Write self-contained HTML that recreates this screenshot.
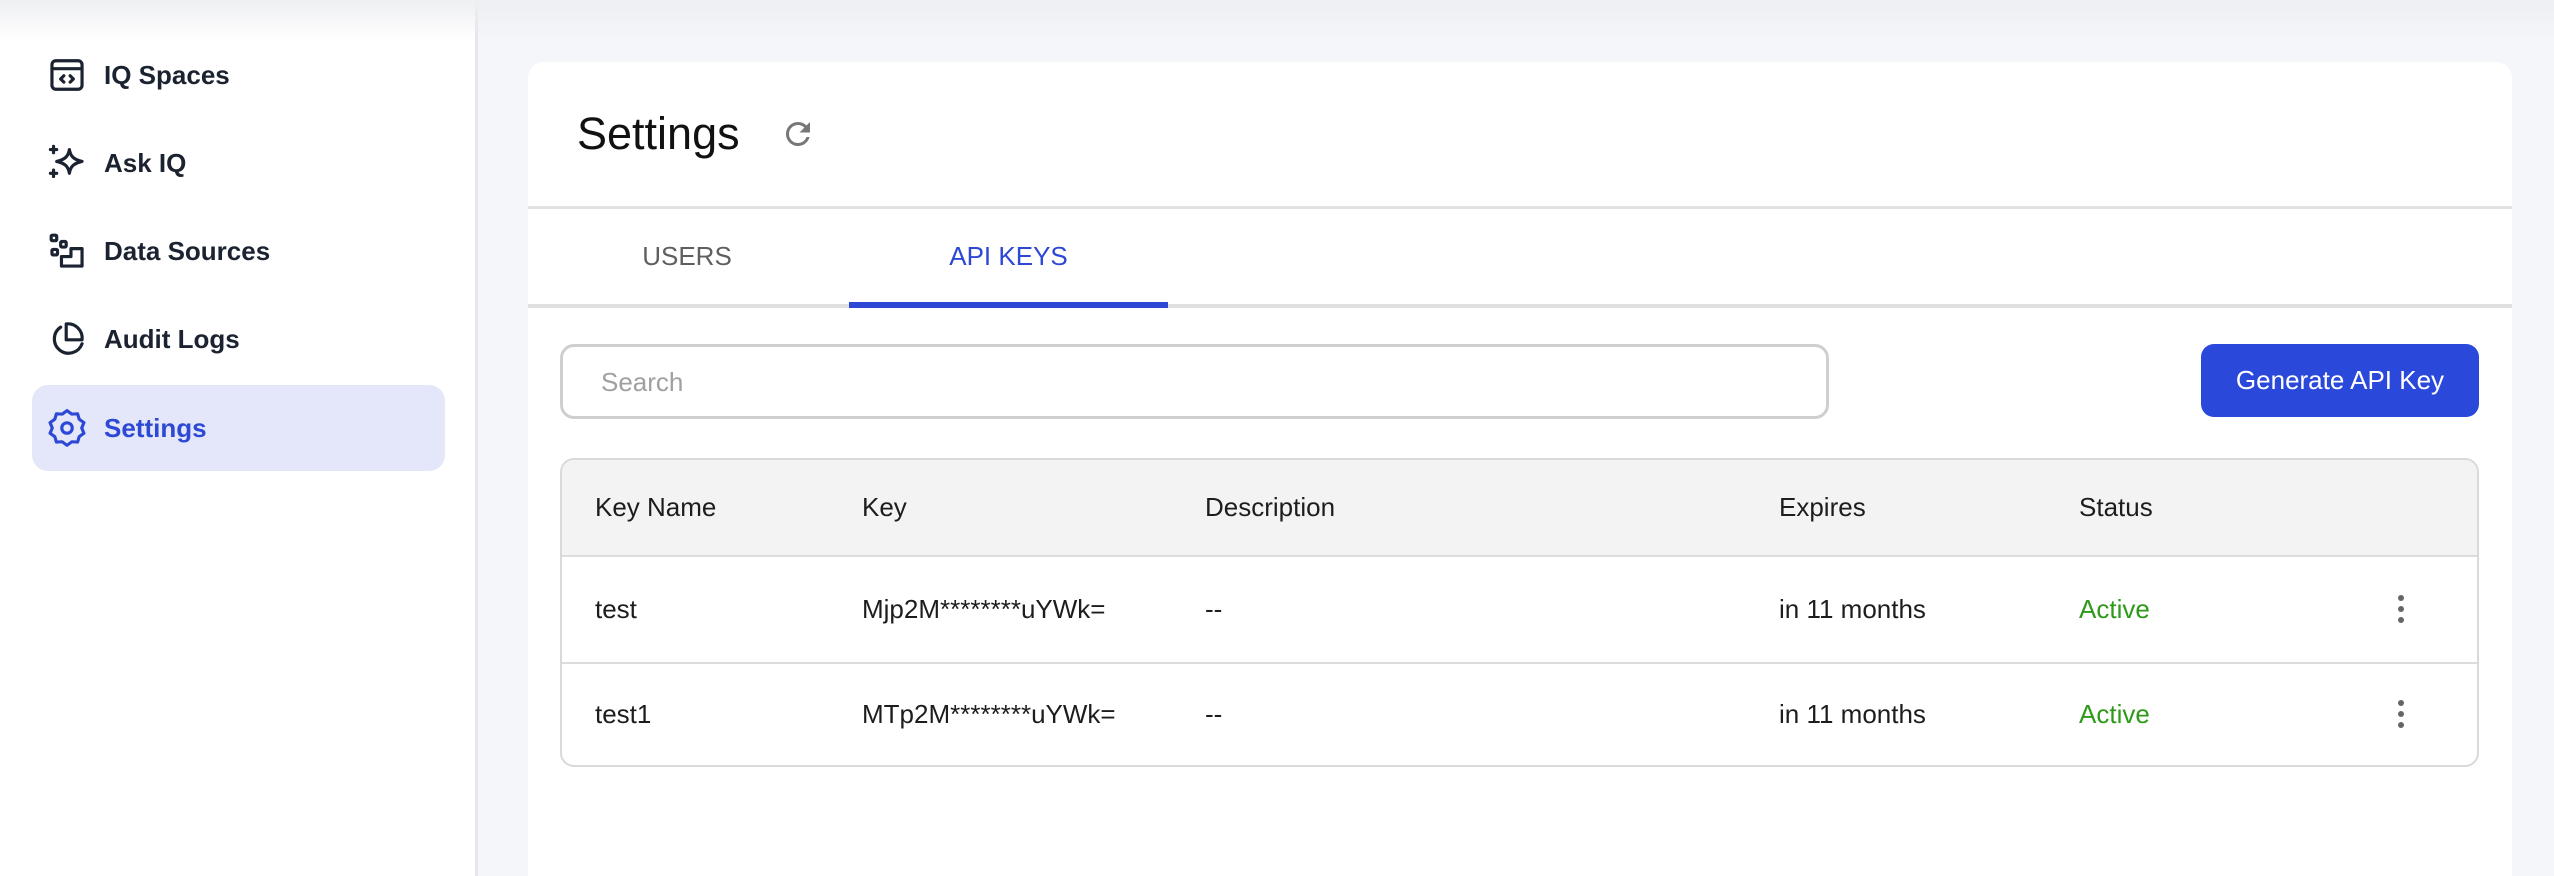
<!DOCTYPE html>
<html style="overflow:hidden"><head><meta charset="utf-8"><style>
*{box-sizing:border-box;margin:0;padding:0}
html,body{width:2554px;height:876px;overflow:hidden}
body{background:#f5f6fa;font-family:"Liberation Sans",Roboto,sans-serif;position:relative}
.side{position:absolute;left:0;top:0;width:478px;height:876px;background:#fff;border-right:3px solid #e6e7ea}
.topsh{position:absolute;left:0;top:0;width:2554px;height:40px;background:linear-gradient(#eeeff2,rgba(245,246,250,0))}
.nav{position:absolute;left:32px;width:413px;height:86px;display:flex;align-items:center;font-size:26px;font-weight:bold;color:#1b2230;border-radius:16px}
.nav svg{position:absolute;left:16px;width:38px;height:38px}
.nav span{position:absolute;left:72px}
.nav.act{background:#e4e7f9;color:#2d48d4}
.card{position:absolute;left:528px;top:62px;width:1984px;height:814px;background:#fff;border-radius:16px 16px 0 0}
.abs{position:absolute}
.td{position:absolute;font-size:26px;color:#1d1d1d}
</style></head><body>
<div class="side">
<div class="topsh"></div>
<div class="nav" style="top:32px"><svg viewBox="0 0 24 24" fill="none" stroke="#1b2230" stroke-width="2" stroke-linecap="round" stroke-linejoin="round"><rect x="2.5" y="3" width="19" height="18" rx="2.5"/><path d="M2.5 8h19M10 12.5l-2 2 2 2M14 12.5l2 2-2 2"/></svg><span>IQ Spaces</span></div>
<div class="nav" style="top:120px"><svg viewBox="0 0 24 24" fill="none" stroke="#1b2230" stroke-width="2" stroke-linecap="round" stroke-linejoin="round"><path d="M13.5 3.5c.7 4.3 2.7 6.3 8 7.5-5.3 1.2-7.3 3.2-8 7.5-.7-4.3-2.7-6.3-8-7.5 5.3-1.2 7.3-3.2 8-7.5zM3.5 1.5v4M1.5 3.5h4M3.5 16.5v4M1.5 18.5h4"/></svg><span>Ask IQ</span></div>
<div class="nav" style="top:208px"><svg viewBox="0 0 24 24" fill="none" stroke="#1b2230" stroke-width="2" stroke-linejoin="round"><rect x="2" y="2" width="3.5" height="3.5" rx=".8"/><rect x="8" y="6" width="3.5" height="3.5" rx=".8"/><rect x="2.5" y="11" width="3.5" height="3.5" rx=".8"/><path d="M8.5 21.5v-6h6v-5h7v11z"/></svg><span>Data Sources</span></div>
<div class="nav" style="top:296px"><svg viewBox="0 0 24 24" fill="none" stroke="#1b2230" stroke-width="2" stroke-linecap="round" stroke-linejoin="round"><path d="M8 4.5A9 9 0 1 0 21.5 15"/><path d="M11.5 2.5a9 9 0 0 1 10 10h-10z"/></svg><span>Audit Logs</span></div>
<div class="nav act" style="top:385px"><svg viewBox="0 0 24 24" fill="none" stroke="#2d48d4" stroke-width="2" stroke-linejoin="round"><path d="M12 2l3 2.3 3.7-.2 1 3.6 3 2.2-1.4 3.5 1.4 3.5-3 2.2-1 3.6-3.7-.2L12 24.8l-3-2.3-3.7.2-1-3.6-3-2.2 1.4-3.5L1.3 9.9l3-2.2 1-3.6 3.7.2z" transform="translate(0 -.9) scale(1 .96)"/><circle cx="12" cy="12" r="3.3"/></svg><span>Settings</span></div>
</div>
<div class="card">
<div class="abs" style="left:49px;top:46px;font-size:45px;color:#111">Settings</div>
<svg class="abs" style="left:252px;top:54px" width="36" height="36" viewBox="0 0 24 24"><path fill="#777" d="M17.65 6.35A7.96 7.96 0 0 0 12 4a8 8 0 1 0 7.73 10h-2.08A6 6 0 1 1 12 6c1.66 0 3.14.69 4.22 1.78L13 11h7V4z"/></svg>
<div class="abs" style="left:0;top:144px;width:1984px;height:3px;background:#e2e2e2"></div>
<div class="abs" style="left:0;top:242px;width:1984px;height:4px;background:#e0e0e0"></div>
<div class="abs" style="left:321px;top:240px;width:319px;height:6px;background:#2d48d4"></div>
<div class="abs" style="left:0;top:179px;width:318px;text-align:center;font-size:26px;font-weight:500;color:#5f5f5f">USERS</div>
<div class="abs" style="left:321px;top:179px;width:319px;text-align:center;font-size:26px;font-weight:500;color:#2d48d4">API KEYS</div>
<div class="abs" style="left:32px;top:282px;width:1269px;height:75px;border:3px solid #cfcfcf;border-radius:14px"></div>
<div class="abs" style="left:73px;top:305px;font-size:26px;color:#a0a0a0">Search</div>
<div class="abs" style="left:1673px;top:282px;width:278px;height:73px;background:#2a48da;border-radius:13px;color:#fff;font-size:26px;display:flex;align-items:center;justify-content:center">Generate API Key</div>
<div class="abs" style="left:32px;top:396px;width:1919px;height:309px;border:2px solid #d9d9d9;border-radius:14px;overflow:hidden">
<div class="abs" style="left:0;top:0;width:100%;height:97px;background:#f3f3f3;border-bottom:2px solid #dcdcdc"></div>
<div class="abs" style="left:0;top:202px;width:100%;height:2px;background:#dcdcdc"></div>
</div>
</div>
<div class="td" style="left:595px;top:492px;font-weight:500">Key Name</div>
<div class="td" style="left:862px;top:492px;font-weight:500">Key</div>
<div class="td" style="left:1205px;top:492px;font-weight:500">Description</div>
<div class="td" style="left:1779px;top:492px;font-weight:500">Expires</div>
<div class="td" style="left:2079px;top:492px;font-weight:500">Status</div>
<div class="td" style="left:595px;top:594px">test</div>
<div class="td" style="left:862px;top:594px">Mjp2M********uYWk=</div>
<div class="td" style="left:1205px;top:594px">--</div>
<div class="td" style="left:1779px;top:594px">in 11 months</div>
<div class="td" style="left:2079px;top:594px;color:#2e9a1a">Active</div>
<div class="td" style="left:595px;top:699px">test1</div>
<div class="td" style="left:862px;top:699px">MTp2M********uYWk=</div>
<div class="td" style="left:1205px;top:699px">--</div>
<div class="td" style="left:1779px;top:699px">in 11 months</div>
<div class="td" style="left:2079px;top:699px;color:#2e9a1a">Active</div>
<svg class="abs" style="left:2393px;top:593px" width="16" height="32" viewBox="0 0 16 32"><circle cx="8" cy="5" r="3" fill="#666"/><circle cx="8" cy="16" r="3" fill="#666"/><circle cx="8" cy="27" r="3" fill="#666"/></svg>
<svg class="abs" style="left:2393px;top:698px" width="16" height="32" viewBox="0 0 16 32"><circle cx="8" cy="5" r="3" fill="#666"/><circle cx="8" cy="16" r="3" fill="#666"/><circle cx="8" cy="27" r="3" fill="#666"/></svg>
</body></html>
